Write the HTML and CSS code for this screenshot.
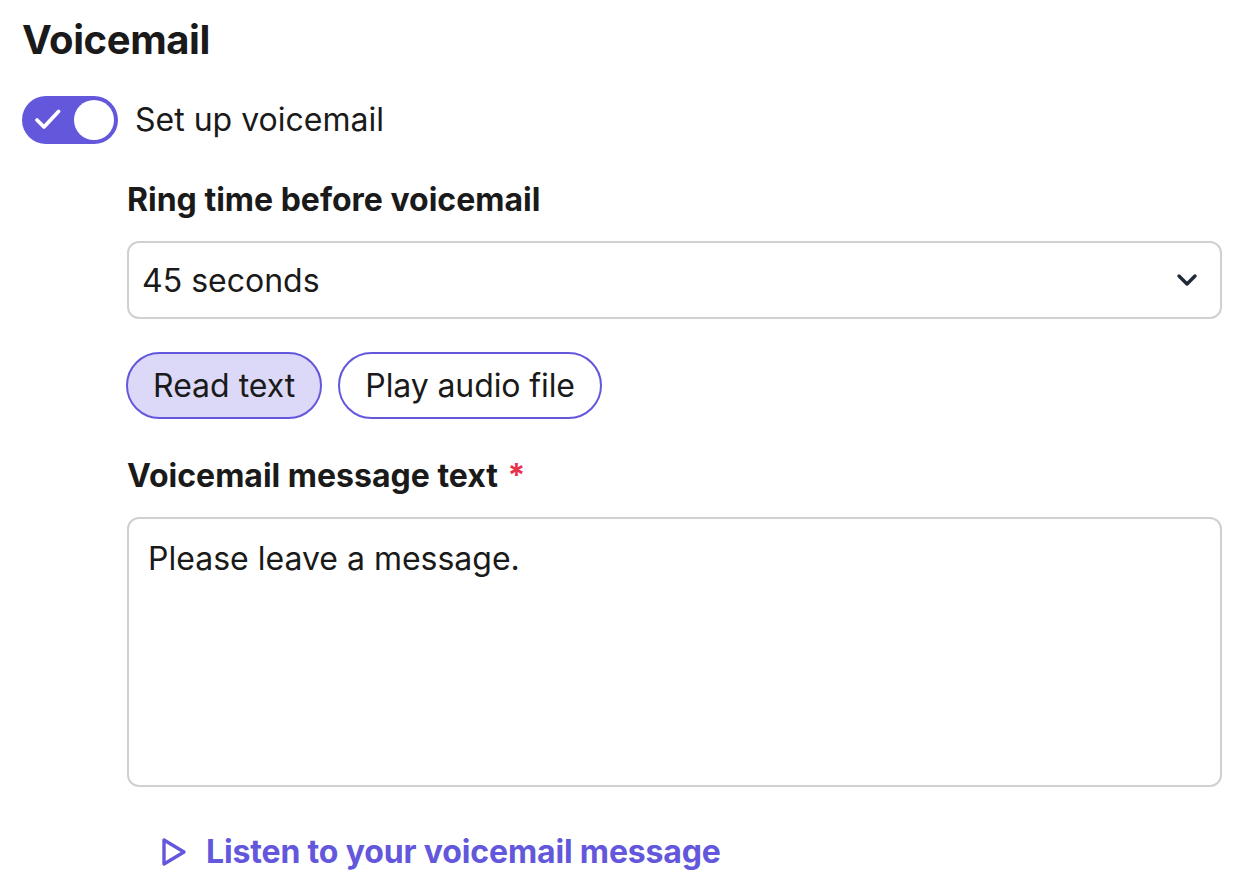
FILE: index.html
```html
<!DOCTYPE html>
<html>
<head>
<meta charset="utf-8">
<link rel="stylesheet" href="styles.css">
</head>
<body>
<div class="page">
  <h1 class="title">Voicemail</h1>
  <div class="toggle-row">
    <span class="toggle">
      <svg class="check" width="32" height="28" viewBox="0 0 32 28"><path d="M4 14 L11 21 L25.5 5.5" fill="none" stroke="#fff" stroke-width="3.8" stroke-linecap="round" stroke-linejoin="round"/></svg>
      <span class="knob"></span>
    </span>
    <span class="toggle-label">Set up voicemail</span>
  </div>
  <div class="indent">
    <div class="label">Ring time before voicemail</div>
    <div class="select">
      <span>45 seconds</span>
      <svg class="chev" width="22" height="14" viewBox="0 0 22 14"><path d="M3 3 L11 11 L19 3" fill="none" stroke="#1f2937" stroke-width="3.4" stroke-linecap="round" stroke-linejoin="round"/></svg>
    </div>
    <div class="pills">
      <span class="pill active">Read text</span>
      <span class="pill">Play audio file</span>
    </div>
    <div class="label">Voicemail message text <span class="req">*</span></div>
    <div class="textarea">Please leave a message.</div>
    <div class="listen">
      <svg class="play" width="28" height="30" viewBox="0 0 28 30"><path d="M4 3 L24 15 L4 27 Z" fill="none" stroke="#6357dc" stroke-width="3.4" stroke-linejoin="round"/></svg>
      <span>Listen to your voicemail message</span>
    </div>
  </div>
</div>
</body>
</html>
```
FILE: styles.css
```css
* { box-sizing: border-box; }
body {
  margin: 0;
  background: #fff;
  font-family: Inter, "Noto Sans", sans-serif;
  color: #1a1a1a;
}
.page {
  padding: 14px 18px 0 22px;
}
.title {
  margin: 0;
  font-size: 40px;
  font-weight: 700;
  line-height: 52px;
  letter-spacing: -0.4px;
}
.toggle-row {
  display: flex;
  align-items: center;
  gap: 17px;
  margin-top: 30px;
}
.toggle {
  position: relative;
  width: 96px;
  height: 48px;
  border-radius: 24px;
  background: #6357dc;
  display: flex;
  align-items: center;
  justify-content: flex-end;
  padding-right: 4px;
}
.check {
  position: absolute;
  left: 11px;
  top: 10px;
}
.knob {
  width: 40px;
  height: 40px;
  border-radius: 50%;
  background: #fff;
}
.toggle-label {
  font-size: 32px;
  line-height: 40px;
}
.indent {
  padding-left: 105px;
}
.label {
  font-size: 32px;
  font-weight: 700;
  line-height: 40px;
  margin-top: 36px;
}
.req { color: #e8334f; margin-left: 2px; }
.select {
  margin-top: 21px;
  height: 78px;
  border: 2px solid #d0d0d0;
  border-radius: 12px;
  display: flex;
  align-items: center;
  justify-content: space-between;
  padding: 0 22px 0 13px;
  font-size: 32px;
}
.pills {
  display: flex;
  gap: 16px;
  margin-top: 33px;
  margin-left: -1px;
}
.pill {
  height: 67px;
  border: 2px solid #6357dc;
  border-radius: 34px;
  padding: 0 25px;
  display: flex;
  align-items: center;
  font-size: 32px;
  background: #fff;
}
.pill.active { background: #dcd9f8; }
.pill:not(.active) { letter-spacing: -0.1px; }
.pills + .label { margin-top: 37px; }
.textarea {
  margin-top: 21px;
  height: 270px;
  border: 2px solid #d0d0d0;
  border-radius: 12px;
  padding: 20px 19px;
  font-size: 32px;
  line-height: 40px;
}
.listen {
  display: flex;
  align-items: center;
  gap: 18px;
  margin-top: 45px;
  margin-left: 33px;
  color: #6357dc;
  font-size: 32px;
  font-weight: 700;
  line-height: 40px;
  letter-spacing: -0.15px;
}
```
